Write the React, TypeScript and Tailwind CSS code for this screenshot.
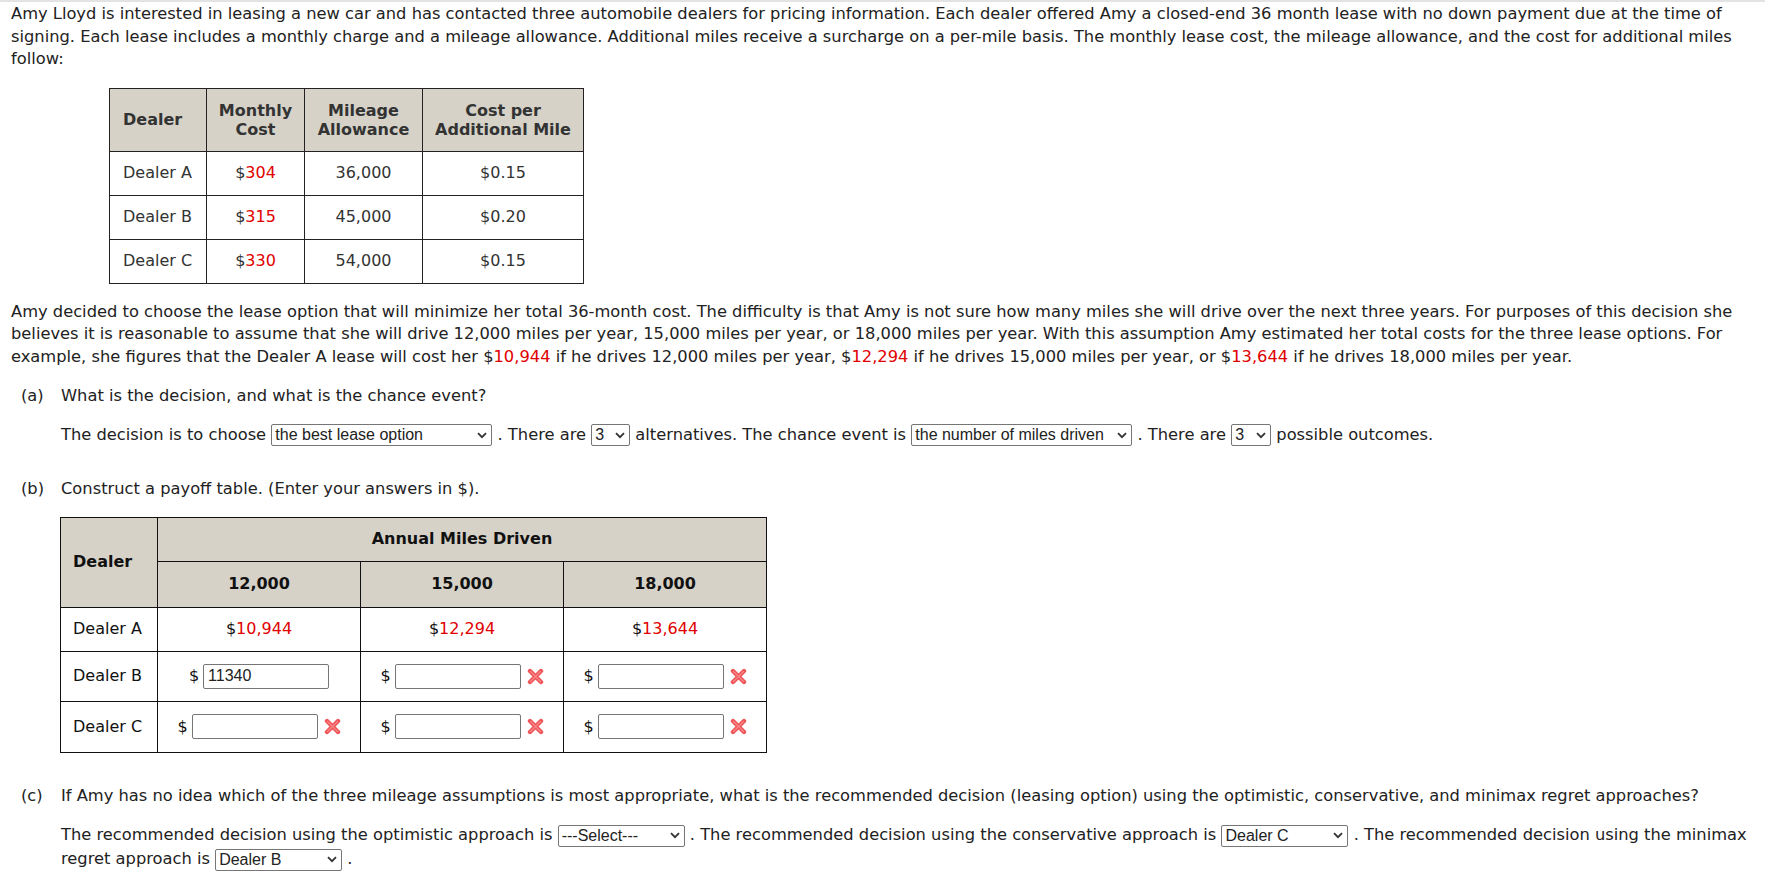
import React from "react";

const font = "font-['DejaVu_Sans',Verdana,sans-serif]";

function Money({ amount }: { amount: string }) {
  return (
    <span>
      $<span className="text-[#e00000]">{amount}</span>
    </span>
  );
}

function Choice({ value, options, width }: { value: string; options: string[]; width: string }) {
  return (
    <span className={`relative inline-block align-middle ${width}`}>
      <select
        defaultValue={value}
        className="h-[22px] w-full appearance-none rounded-[2px] border border-[#767676] bg-white pl-[3px] pr-[18px] font-['Liberation_Sans',Arial,sans-serif] text-[16px] leading-[20px] text-[#222] outline-none"
      >
        {options.map((option) => (
          <option key={option} value={option}>
            {option}
          </option>
        ))}
      </select>
      <svg
        className="pointer-events-none absolute right-[5px] top-[8px]"
        width="10"
        height="7"
        viewBox="0 0 10 7"
        fill="none"
      >
        <path d="M1 1.2 L5 5.2 L9 1.2" stroke="#333" strokeWidth="1.8" />
      </svg>
    </span>
  );
}

function WrongMark() {
  return (
    <svg className="inline-block align-middle" width="17" height="17" viewBox="0 0 17 17">
      <path d="M3 3 L14 14 M14 3 L3 14" stroke="#ef5558" strokeWidth="4.4" strokeLinecap="round" />
      <path d="M3.5 3.5 L13.5 13.5 M13.5 3.5 L3.5 13.5" stroke="#f88789" strokeWidth="1.2" strokeLinecap="round" />
    </svg>
  );
}

function Answer({ value, wrong = true }: { value?: string; wrong?: boolean }) {
  return (
    <span className="inline-flex items-center whitespace-nowrap">
      <span className="mr-[4px]">$</span>
      <input
        defaultValue={value}
        className="h-[25px] w-[126px] rounded-[2px] border border-[#767676] bg-white px-[4px] font-['Liberation_Sans',Arial,sans-serif] text-[16px] text-[#222] outline-none"
      />
      {wrong && (
        <span className="ml-[6px] inline-flex">
          <WrongMark />
        </span>
      )}
    </span>
  );
}

const dealers = [
  { name: "Dealer A", monthly: "304", allowance: "36,000", perMile: "$0.15" },
  { name: "Dealer B", monthly: "315", allowance: "45,000", perMile: "$0.20" },
  { name: "Dealer C", monthly: "330", allowance: "54,000", perMile: "$0.15" },
];

const dealerOptions = ["---Select---", "Dealer A", "Dealer B", "Dealer C"];

export default function App() {
  return (
    <div className={`min-h-screen border-t-2 border-[#e3e3e3] bg-white ${font} text-[16.3px] leading-[22.5px] text-[#222]`}>
      <div className="pl-[11px] pr-[8px] pt-[1px]">
        <p>
          Amy Lloyd is interested in leasing a new car and has contacted three automobile dealers for pricing information. Each
          dealer offered Amy a closed-end 36 month lease with no down payment due at the time of signing. Each lease includes a
          monthly charge and a mileage allowance. Additional miles receive a surcharge on a per-mile basis. The monthly lease cost,
          the mileage allowance, and the cost for additional miles follow:
        </p>

        <table className="ml-[98px] mt-[17px] border-collapse text-[16px] text-[#333]">
          <thead>
            <tr className="h-[63px] bg-[#d6d2c8] font-bold leading-[19px]">
              <th className="w-[97px] border border-[#222] px-[13px] text-left">Dealer</th>
              <th className="w-[98px] border border-[#222] px-[4px]">
                Monthly
                <br />
                Cost
              </th>
              <th className="w-[118px] border border-[#222] px-[4px]">
                Mileage
                <br />
                Allowance
              </th>
              <th className="w-[161px] border border-[#222] px-[4px]">
                Cost per
                <br />
                Additional Mile
              </th>
            </tr>
          </thead>
          <tbody>
            {dealers.map((d) => (
              <tr key={d.name} className="h-[44px]">
                <td className="border border-[#222] px-[13px]">{d.name}</td>
                <td className="border border-[#222] text-center">
                  <Money amount={d.monthly} />
                </td>
                <td className="border border-[#222] text-center">{d.allowance}</td>
                <td className="border border-[#222] text-center">{d.perMile}</td>
              </tr>
            ))}
          </tbody>
        </table>

        <p className="mt-[17px]">
          Amy decided to choose the lease option that will minimize her total 36-month cost. The difficulty is that Amy is not sure
          how many miles she will drive over the next three years. For purposes of this decision she believes it is reasonable to
          assume that she will drive 12,000 miles per year, 15,000 miles per year, or 18,000 miles per year. With this assumption
          Amy estimated her total costs for the three lease options. For example, she figures that the Dealer A lease will cost her{" "}
          <Money amount="10,944" /> if he drives 12,000 miles per year, <Money amount="12,294" /> if he drives 15,000 miles per year,
          or <Money amount="13,644" /> if he drives 18,000 miles per year.
        </p>

        <div className="mt-[17px] flex">
          <span className="w-[50px] shrink-0 pl-[10px]">(a)</span>
          <div className="min-w-0 flex-1">
            <p>What is the decision, and what is the chance event?</p>
            <p className="mt-[16px]">
              The decision is to choose{" "}
              <Choice
                value="the best lease option"
                options={["---Select---", "the best lease option", "the number of miles driven"]}
                width="w-[221px]"
              />{" "}
              . There are <Choice value="3" options={["2", "3", "4"]} width="w-[39px]" /> alternatives. The chance event is{" "}
              <Choice
                value="the number of miles driven"
                options={["---Select---", "the best lease option", "the number of miles driven"]}
                width="w-[221px]"
              />{" "}
              . There are <Choice value="3" options={["2", "3", "4"]} width="w-[40px]" /> possible outcomes.
            </p>
          </div>
        </div>

        <div className="mt-[32px] flex">
          <span className="w-[50px] shrink-0 pl-[10px]">(b)</span>
          <div className="min-w-0 flex-1">
            <p>Construct a payoff table. (Enter your answers in $).</p>
          </div>
        </div>

        <table className="ml-[49px] mt-[16px] border-collapse text-[16px] text-[#111]">
          <thead>
            <tr className="h-[44px] bg-[#d6d2c8] font-bold">
              <th rowSpan={2} className="w-[97px] border border-[#111] px-[12px] text-left">
                Dealer
              </th>
              <th colSpan={3} className="border border-[#111]">
                Annual Miles Driven
              </th>
            </tr>
            <tr className="h-[46px] bg-[#d6d2c8] font-bold">
              <th className="w-[203px] border border-[#111]">12,000</th>
              <th className="w-[203px] border border-[#111]">15,000</th>
              <th className="w-[203px] border border-[#111]">18,000</th>
            </tr>
          </thead>
          <tbody>
            <tr className="h-[44px]">
              <td className="border border-[#111] px-[12px]">Dealer A</td>
              <td className="border border-[#111] text-center">
                <Money amount="10,944" />
              </td>
              <td className="border border-[#111] text-center">
                <Money amount="12,294" />
              </td>
              <td className="border border-[#111] text-center">
                <Money amount="13,644" />
              </td>
            </tr>
            <tr className="h-[50px]">
              <td className="border border-[#111] px-[12px]">Dealer B</td>
              <td className="border border-[#111] text-center">
                <Answer value="11340" wrong={false} />
              </td>
              <td className="border border-[#111] text-center">
                <Answer />
              </td>
              <td className="border border-[#111] text-center">
                <Answer />
              </td>
            </tr>
            <tr className="h-[51px]">
              <td className="border border-[#111] px-[12px]">Dealer C</td>
              <td className="border border-[#111] text-center">
                <Answer />
              </td>
              <td className="border border-[#111] text-center">
                <Answer />
              </td>
              <td className="border border-[#111] text-center">
                <Answer />
              </td>
            </tr>
          </tbody>
        </table>

        <div className="mt-[32px] flex pb-[20px]">
          <span className="w-[50px] shrink-0 pl-[10px]">(c)</span>
          <div className="min-w-0 flex-1">
            <p>
              If Amy has no idea which of the three mileage assumptions is most appropriate, what is the recommended decision (leasing
              option) using the optimistic, conservative, and minimax regret approaches?
            </p>
            <p className="mt-[16px] leading-[23px]">
              The recommended decision using the optimistic approach is{" "}
              <Choice value="---Select---" options={dealerOptions} width="w-[127px]" /> . The recommended decision using the
              conservative approach is <Choice value="Dealer C" options={dealerOptions} width="w-[127px]" /> . The recommended
              decision using the minimax regret approach is <Choice value="Dealer B" options={dealerOptions} width="w-[127px]" /> .
            </p>
          </div>
        </div>
      </div>
    </div>
  );
}
